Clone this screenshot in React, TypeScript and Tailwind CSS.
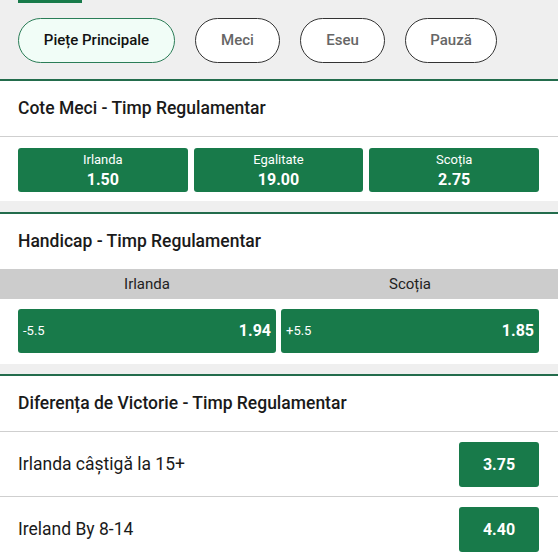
import React from "react";

const GREEN = "bg-[#187a4a]";

function Pill({ label, width, active }: { label: string; width: string; active?: boolean }) {
  return (
    <button
      className={
        active
          ? `${width} h-[45px] rounded-full border border-[#2b7d57] bg-[#f1fdf7] text-[15px] font-medium text-[#111]`
          : `${width} h-[45px] rounded-full border border-[#333] bg-white text-[15px] font-medium text-[#666]`
      }
    >
      {label}
    </button>
  );
}

function SectionHeader({ title }: { title: string }) {
  return (
    <div className="h-[57px] flex items-center px-[18px] border-t-2 border-[#236c4c]">
      <h2 className="text-[17.5px] font-medium text-[#1a1a1a]">{title}</h2>
    </div>
  );
}

export default function App() {
  const matchOdds = [
    { label: "Irlanda", odd: "1.50" },
    { label: "Egalitate", odd: "19.00" },
    { label: "Scoția", odd: "2.75" },
  ];
  const handicap = [
    { team: "Irlanda", line: "-5.5", odd: "1.94" },
    { team: "Scoția", line: "+5.5", odd: "1.85" },
  ];
  const margins = [
    { label: "Irlanda câștigă la 15+", odd: "3.75" },
    { label: "Ireland By 8-14", odd: "4.40" },
  ];

  return (
    <div className="w-[558px] h-[558px] overflow-hidden bg-white font-['Roboto',sans-serif]">
      {/* Tabs */}
      <div className="bg-[#efefef]">
        <div className="ml-[18px] w-[64px] h-[3px] bg-[#187a4a]" />
        <div className="flex gap-5 px-[18px] pt-[15px] pb-[16px]">
          <Pill label="Piețe Principale" width="w-[157px]" active />
          <Pill label="Meci" width="w-[85px]" />
          <Pill label="Eseu" width="w-[85px]" />
          <Pill label="Pauză" width="w-[92px]" />
        </div>
      </div>

      {/* Cote Meci */}
      <SectionHeader title="Cote Meci - Timp Regulamentar" />
      <div className="border-t border-[#cfcfcf] pl-[18px] pr-[19px] pt-[11px] pb-[9px] grid grid-cols-3 gap-[6px]">
        {matchOdds.map((o) => (
          <button
            key={o.label}
            className={`${GREEN} h-[44px] rounded-[3px] flex flex-col items-center justify-center text-white`}
          >
            <span className="text-[13px] leading-[20px]">{o.label}</span>
            <span className="text-[16px] leading-[20px] font-bold">{o.odd}</span>
          </button>
        ))}
      </div>
      <div className="h-[11px] bg-[#efefef]" />

      {/* Handicap */}
      <SectionHeader title="Handicap - Timp Regulamentar" />
      <div className="bg-[#cccccc] h-[30px] pl-[18px] pr-[19px] grid grid-cols-2 gap-[5px] items-center">
        {handicap.map((h) => (
          <span key={h.team} className="text-center text-[15px] text-[#222]">
            {h.team}
          </span>
        ))}
      </div>
      <div className="pl-[18px] pr-[19px] pt-[10px] pb-[11px] grid grid-cols-2 gap-[5px]">
        {handicap.map((h) => (
          <button
            key={h.team}
            className={`${GREEN} h-[44px] rounded-[3px] flex items-center justify-between pl-[5px] pr-[5px] text-white`}
          >
            <span className="text-[13px]">{h.line}</span>
            <span className="text-[16px] font-bold">{h.odd}</span>
          </button>
        ))}
      </div>
      <div className="h-[10px] bg-[#efefef]" />

      {/* Diferenta de Victorie */}
      <SectionHeader title="Diferența de Victorie - Timp Regulamentar" />
      {margins.map((m) => (
        <div
          key={m.label}
          className="border-t border-[#cfcfcf] h-[65px] flex items-start justify-between pl-[18px] pr-[19px] pt-[10px]"
        >
          <span className="text-[17.5px] text-[#1a1a1a] leading-[45px]">{m.label}</span>
          <button
            className={`${GREEN} w-[80px] h-[45px] rounded-[3px] text-white text-[16px] font-bold`}
          >
            {m.odd}
          </button>
        </div>
      ))}
    </div>
  );
}
